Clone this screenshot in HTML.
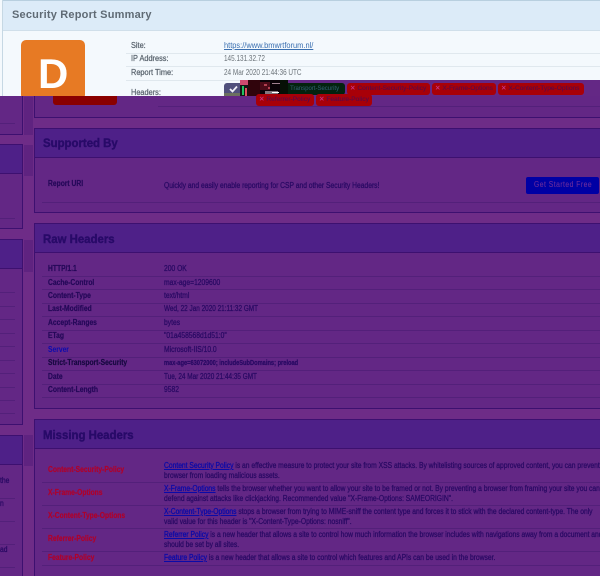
<!DOCTYPE html>
<html><head><meta charset="utf-8"><style>
*{box-sizing:border-box}
html,body{margin:0;padding:0;width:600px;height:576px;overflow:hidden}
body{background:#6e2c87;font-family:"Liberation Sans",sans-serif}
#w{position:absolute;left:0;top:0;width:600px;height:576px;overflow:hidden;background:#6e2c87}
.a{position:absolute}
.t{position:absolute;white-space:nowrap;font-size:8px;line-height:12px;transform-origin:0 0;transform:scaleX(.84);-webkit-text-stroke:.3px currentColor}
.top{color:#5c6670;transform:scaleX(.92);-webkit-text-stroke:.25px currentColor}
.tv{color:#6a7278;-webkit-text-stroke:0;transform:scaleX(.8)}
.b{font-weight:bold;-webkit-text-stroke:0}
.lb{color:#240858;font-weight:bold;-webkit-text-stroke:.2px currentColor}
.v{color:#2a0a64}
.panel{position:absolute;background:#632785;border:1px solid #3d1070}
.rp{border-right:0}
.head{position:absolute;left:0;right:0;top:0;height:29px;background:#4e2088;border-bottom:1px solid #3d1070}
.h2{position:absolute;left:43px;white-space:nowrap;font-size:12px;font-weight:bold;color:#280a68;line-height:16px;transform-origin:0 0;transform:scaleX(.95);-webkit-text-stroke:.4px currentColor}
.s{position:absolute;height:1px;background:#53207a}
.st{position:absolute;left:24px;width:9px;background:#5f2380}
.red{color:#b0002a;font-weight:bold;-webkit-text-stroke:.2px currentColor}
.lnk{color:#0a0aa8;text-decoration:underline}
.bd{position:absolute;height:12px;background:#a80008;border-radius:3px;color:#560a4c;font-size:6.6px;line-height:12px;white-space:nowrap;padding-left:3px;overflow:hidden;-webkit-text-stroke:.1px currentColor}
.bd i{font-style:normal;color:#c83a90}
</style></head><body><div id="w">

<div class="a" style="left:0;top:0;width:600px;height:96px;background:#f4f9fd"></div>
<div class="a" style="left:2px;top:0;width:598px;height:31px;background:#dcebf8;border-top:1px solid #b8cfdf;border-bottom:1px solid #d0dfea"></div>
<div class="a" style="left:2px;top:0;width:1px;height:96px;background:#c6d8e4"></div>
<div class="t b" style="left:12px;top:7px;font-size:11px;line-height:16px;color:#5f6a74;letter-spacing:.2px;transform:none">Security Report Summary</div>
<div class="a" style="left:21px;top:40px;width:64px;height:60px;background:#e77a24;border-radius:5px"></div>
<div class="t b" style="left:38px;top:50px;font-size:42px;line-height:48px;color:#fff;transform:none">D</div>

<div class="t top" style="left:131px;top:40px">Site:</div>
<div class="t top" style="left:131px;top:53px">IP Address:</div>
<div class="t top" style="left:131px;top:67px">Report Time:</div>
<div class="t top" style="left:131px;top:87px">Headers:</div>
<div class="t" style="left:224px;top:40px;color:#3a6fb0;text-decoration:underline;transform:scaleX(.93);-webkit-text-stroke:0">https://www.bmwrtforum.nl/</div>
<div class="t tv" style="left:224px;top:53px">145.131.32.72</div>
<div class="t tv" style="left:224px;top:67px">24 Mar 2020 21:44:36 UTC</div>
<div class="a" style="left:126px;top:53px;width:474px;height:1px;background:#e0e8ee"></div>
<div class="a" style="left:126px;top:66px;width:474px;height:1px;background:#e0e8ee"></div>
<div class="a" style="left:126px;top:80px;width:474px;height:1px;background:#e0e8ee"></div>

<!-- purple overlay -->
<div class="a" style="left:0;top:96px;width:600px;height:480px;background:#6e2c87"></div>
<div class="a" style="left:288px;top:80px;width:312px;height:16px;background:#642885"></div>

<!-- top-panel continuation -->
<div class="a" style="left:34px;top:96px;width:566px;height:22px;background:#632785;border-left:1px solid #3d1070;border-bottom:1px solid #3d1070"></div>
<div class="a" style="left:53px;top:96px;width:64px;height:9px;background:#8a0000;border-radius:0 0 3px 3px"></div>
<div class="s" style="left:158px;top:106px;width:442px"></div>

<!-- header badges -->
<div class="a" style="left:224px;top:83px;width:20px;height:11px;background:#50507c;border-radius:3px 0 0 0"></div>
<div class="a" style="left:224px;top:93px;width:16px;height:3px;background:#6c7060"></div>
<svg class="a" style="left:229px;top:85px" width="9" height="8" viewBox="0 0 9 8"><path d="M1 4l2.5 2.5L8 1.5" fill="none" stroke="#f0f0f8" stroke-width="1.8"/></svg>
<svg class="a" style="left:240px;top:80px" width="48" height="16" viewBox="0 0 48 16" shape-rendering="crispEdges">
<rect width="48" height="16" fill="#0a0208"/>
<rect x="0" y="0" width="8" height="5" fill="#d04a70"/>
<rect x="0" y="5" width="8" height="11" fill="#141414"/>
<rect x="2" y="6" width="2" height="9" fill="#20c060"/>
<rect x="5" y="8" width="2" height="8" fill="#e05060"/>
<rect x="8" y="0" width="12" height="16" fill="#30040c"/>
<rect x="20" y="2" width="10" height="8" fill="#4a0a18"/>
<rect x="24" y="4" width="3" height="2" fill="#b04050"/>
<rect x="28" y="7" width="2" height="2" fill="#b04050"/>
<rect x="25" y="11" width="13" height="4" fill="#807880"/>
<rect x="32" y="3" width="8" height="1" fill="#a08090"/>
<rect x="32" y="12" width="7" height="1" fill="#fff"/>
<rect x="34" y="14" width="6" height="1" fill="#fff"/>
<rect x="40" y="0" width="8" height="16" fill="#061006"/>
</svg>
<div class="bd" style="left:288px;top:83px;width:57px;background:#04220e;color:#2c5a68;border-radius:0 3px 3px 0;padding-left:2px;font-size:6px">Transport-Security</div>
<div class="bd" style="left:347px;top:83px;width:83px"><i>✕</i> Content-Security-Policy</div>
<div class="bd" style="left:432px;top:83px;width:64px"><i>✕</i> X-Frame-Options</div>
<div class="bd" style="left:498px;top:83px;width:86px"><i>✕</i> X-Content-Type-Options</div>
<div class="bd" style="left:256px;top:94px;width:58px"><i>✕</i> Referrer-Policy</div>
<div class="bd" style="left:316px;top:94px;width:56px"><i>✕</i> Feature-Policy</div>

<!-- left column -->
<div class="st" style="top:97px;height:38px"></div>
<div class="st" style="top:145px;height:31px"></div>
<div class="st" style="top:240px;height:32px"></div>
<div class="st" style="top:435px;height:31px"></div>
<div class="panel" style="left:-2px;top:96px;width:25px;height:39px;border-top:0"></div>
<div class="panel" style="left:-2px;top:144px;width:25px;height:85px"><div class="head"></div></div>
<div class="panel" style="left:-2px;top:239px;width:25px;height:186px"><div class="head"></div></div>
<div class="panel" style="left:-2px;top:435px;width:25px;height:141px;border-bottom:0"><div class="head"></div></div>
<div class="s" style="left:0;top:123px;width:15px"></div>
<div class="s" style="left:0;top:218px;width:15px"></div>
<div class="s" style="left:0;top:292px;width:15px"></div>
<div class="s" style="left:0;top:306px;width:15px"></div>
<div class="s" style="left:0;top:319px;width:15px"></div>
<div class="s" style="left:0;top:333px;width:15px"></div>
<div class="s" style="left:0;top:346px;width:15px"></div>
<div class="s" style="left:0;top:360px;width:15px"></div>
<div class="s" style="left:0;top:373px;width:15px"></div>
<div class="s" style="left:0;top:387px;width:15px"></div>
<div class="s" style="left:0;top:400px;width:15px"></div>
<div class="s" style="left:0;top:413px;width:15px"></div>
<div class="s" style="left:0;top:498px;width:15px"></div>
<div class="s" style="left:0;top:521px;width:15px"></div>
<div class="s" style="left:0;top:544px;width:15px"></div>
<div class="s" style="left:0;top:567px;width:15px"></div>
<div class="t v" style="left:0;top:475px">the</div>
<div class="t v" style="left:0;top:498px">n</div>
<div class="t v" style="left:0;top:544px">ad</div>

<!-- Supported By -->
<div class="panel rp" style="left:34px;top:128px;width:566px;height:85px"><div class="head"></div></div>
<div class="h2" style="top:135px">Supported By</div>
<div class="t lb" style="left:48px;top:178px">Report URI</div>
<div class="t v" style="left:164px;top:180px">Quickly and easily enable reporting for CSP and other Security Headers!</div>
<div class="s" style="left:42px;top:202px;width:558px"></div>
<div class="a" style="left:526px;top:177px;width:73px;height:17px;background:#0000a4;border-radius:2px"></div>
<div class="t" style="left:534px;top:179px;color:#6a2c9c;letter-spacing:.6px;-webkit-text-stroke:.1px currentColor">Get Started Free</div>

<!-- Raw Headers -->
<div class="panel rp" style="left:34px;top:223px;width:566px;height:186px"><div class="head"></div></div>
<div class="h2" style="top:231px">Raw Headers</div>
<div class="t lb" style="left:48px;top:263px">HTTP/1.1</div><div class="t v" style="left:164px;top:263px">200 OK</div>
<div class="t lb" style="left:48px;top:277px">Cache-Control</div><div class="t v" style="left:164px;top:277px">max-age=1209600</div>
<div class="t lb" style="left:48px;top:290px">Content-Type</div><div class="t v" style="left:164px;top:290px">text/html</div>
<div class="t lb" style="left:48px;top:303px">Last-Modified</div><div class="t v" style="left:164px;top:303px;transform:scaleX(.8)">Wed, 22 Jan 2020 21:11:32 GMT</div>
<div class="t lb" style="left:48px;top:317px">Accept-Ranges</div><div class="t v" style="left:164px;top:317px">bytes</div>
<div class="t lb" style="left:48px;top:330px">ETag</div><div class="t v" style="left:164px;top:330px">"01a458568d1d51:0"</div>
<div class="t b" style="left:48px;top:344px;color:#0a0ab0">Server</div><div class="t v" style="left:164px;top:344px">Microsoft-IIS/10.0</div>
<div class="t b" style="left:48px;top:357px;color:#170840;-webkit-text-stroke:.2px currentColor">Strict-Transport-Security</div><div class="t v" style="left:164px;top:357px;font-weight:bold;font-size:7.5px;transform:scaleX(.76)">max-age=63072000; includeSubDomains; preload</div>
<div class="t lb" style="left:48px;top:371px">Date</div><div class="t v" style="left:164px;top:371px;transform:scaleX(.8)">Tue, 24 Mar 2020 21:44:35 GMT</div>
<div class="t lb" style="left:48px;top:384px">Content-Length</div><div class="t v" style="left:164px;top:384px">9582</div>
<div class="s" style="left:42px;top:276px;width:558px"></div>
<div class="s" style="left:42px;top:289px;width:558px"></div>
<div class="s" style="left:42px;top:303px;width:558px"></div>
<div class="s" style="left:42px;top:316px;width:558px"></div>
<div class="s" style="left:42px;top:330px;width:558px"></div>
<div class="s" style="left:42px;top:343px;width:558px"></div>
<div class="s" style="left:42px;top:357px;width:558px"></div>
<div class="s" style="left:42px;top:370px;width:558px"></div>
<div class="s" style="left:42px;top:384px;width:558px"></div>
<div class="s" style="left:42px;top:397px;width:558px"></div>

<!-- Missing Headers -->
<div class="panel rp" style="left:34px;top:419px;width:566px;height:157px;border-bottom:0"><div class="head"></div></div>
<div class="h2" style="top:427px">Missing Headers</div>
<div class="t red" style="left:48px;top:464px">Content-Security-Policy</div>
<div class="t red" style="left:48px;top:487px">X-Frame-Options</div>
<div class="t red" style="left:48px;top:510px">X-Content-Type-Options</div>
<div class="t red" style="left:48px;top:533px">Referrer-Policy</div>
<div class="t red" style="left:48px;top:552px">Feature-Policy</div>

<div class="t v" style="left:164px;top:460px"><span class="lnk">Content Security Policy</span> is an effective measure to protect your site from XSS attacks. By whitelisting sources of approved content, you can prevent the</div>
<div class="t v" style="left:164px;top:470px">browser from loading malicious assets.</div>
<div class="t v" style="left:164px;top:483px"><span class="lnk">X-Frame-Options</span> tells the browser whether you want to allow your site to be framed or not. By preventing a browser from framing your site you can</div>
<div class="t v" style="left:164px;top:493px">defend against attacks like clickjacking. Recommended value "X-Frame-Options: SAMEORIGIN".</div>
<div class="t v" style="left:164px;top:506px"><span class="lnk">X-Content-Type-Options</span> stops a browser from trying to MIME-sniff the content type and forces it to stick with the declared content-type. The only</div>
<div class="t v" style="left:164px;top:516px">valid value for this header is "X-Content-Type-Options: nosniff".</div>
<div class="t v" style="left:164px;top:529px"><span class="lnk">Referrer Policy</span> is a new header that allows a site to control how much information the browser includes with navigations away from a document and</div>
<div class="t v" style="left:164px;top:539px">should be set by all sites.</div>
<div class="t v" style="left:164px;top:552px"><span class="lnk">Feature Policy</span> is a new header that allows a site to control which features and APIs can be used in the browser.</div>
<div class="s" style="left:42px;top:482px;width:558px"></div>
<div class="s" style="left:42px;top:505px;width:558px"></div>
<div class="s" style="left:42px;top:528px;width:558px"></div>
<div class="s" style="left:42px;top:551px;width:558px"></div>
<div class="s" style="left:42px;top:565px;width:558px"></div>
</div></body></html>
